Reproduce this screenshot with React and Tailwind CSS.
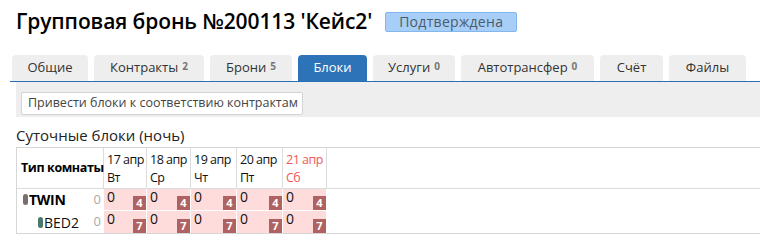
const tabs = [
  { label: "Общие", w: "w-[76px]" },
  { label: "Контракты", count: 2, w: "w-[110px]" },
  { label: "Брони", count: 5, w: "w-[82px]" },
  { label: "Блоки", active: true, w: "w-[69px]" },
  { label: "Услуги", count: 0, w: "w-[82px]" },
  { label: "Автотрансфер", count: 0, w: "w-[133px]" },
  { label: "Счёт", w: "w-[63px]" },
  { label: "Файлы", w: "w-[77px]" },
];

const days = [
  { date: "17 апр", dow: "Вт", w: "w-[43px]" },
  { date: "18 апр", dow: "Ср", w: "w-[44px]" },
  { date: "19 апр", dow: "Чт", w: "w-[46px]" },
  { date: "20 апр", dow: "Пт", w: "w-[46px]" },
  { date: "21 апр", dow: "Сб", w: "w-[44px]", weekend: true },
];

const rooms = [
  { name: "TWIN", dot: "bg-[#7b7069]", total: 4, bold: true },
  { name: "BED2", dot: "bg-[#4b786b]", total: 7, indent: true },
];

function Cell({ w, total }) {
  return (
    <div className={`${w} relative h-full bg-[#ffdcdc] border-r border-white`}>
      <span className="absolute left-[3px] top-[1px] text-[14px] leading-none text-[#111]">0</span>
      <span className="absolute right-0 bottom-0 w-[13px] h-[14px] bg-[#b06262] text-white text-[11px] font-bold leading-[14px] text-center">
        {total}
      </span>
    </div>
  );
}

export default function App() {
  return (
    <div className="bg-white w-[760px] h-[251px] overflow-hidden pl-[10px] text-[#222]" style={{ fontFamily: "'Open Sans', 'Noto Sans', sans-serif" }}>
      <div className="flex items-center gap-[13px] ml-[6px] h-[43px] pt-[1px]">
        <h1 className="text-[21px] font-semibold text-black tracking-[-0.1px]">
          Групповая бронь №200113 'Кейс2'
        </h1>
        <span className="w-[132px] text-center bg-[#a6cef7] border border-[#83b6ec] rounded-[2px] h-[20px] leading-[18px] text-[14px] tracking-[0.3px] text-[#4d5a68]">
          Подтверждена
        </span>
      </div>

      <div className="flex gap-[6px] pl-[2px] mt-[12px] border-b-[1.5px] border-[#2a6fb3]">
        {tabs.map((t) => (
          <div
            key={t.label}
            className={`${t.w} h-[26px] rounded-t-[4px] flex items-center justify-center text-[13px] ${
              t.active ? "bg-[#2d73b7] text-white" : "bg-[#eeeeee] text-[#333]"
            }`}
          >
            {t.label}
            {t.count !== undefined && (
              <span className="ml-[4px] text-[10px] font-bold text-[#777] -mt-[3px]">{t.count}</span>
            )}
          </div>
        ))}
      </div>

      <div className="ml-[6px] bg-[#eeeeee] h-[35px] px-[5px] pt-[7px]">
        <button className="h-[23px] w-[282px] bg-white border border-[#d4d4d4] rounded-[2px] text-[12.5px] text-[#444] text-left pl-[6px]">
          Привести блоки к соответствию контрактам
        </button>
      </div>

      <div className="ml-[6px] mt-[8px] text-[15px] leading-[20px] text-[#222]">Суточные блоки (ночь)</div>

      <div className="ml-[6px] mt-[2px] border-t border-b border-l border-[#d6d6d6]">
        <div className="flex h-[41px] border-b border-[#dcdcdc]">
          <div className="w-[87px] flex items-center pl-[4px] text-[12.5px] font-bold text-black border-r border-[#dcdcdc] whitespace-nowrap tracking-[-0.4px]">
            Тип комнаты
          </div>
          {days.map((d) => (
            <div
              key={d.date}
              className={`${d.w} border-r border-[#dcdcdc] pl-[3px] pt-[3px] text-[12.5px] leading-[18px] whitespace-nowrap overflow-hidden tracking-[-0.5px] ${
                d.weekend ? "text-[#f05a5a]" : "text-[#111]"
              }`}
            >
              <div>{d.date}</div>
              <div>{d.dow}</div>
            </div>
          ))}
          <div className="flex-1" />
        </div>
        {rooms.map((r, i) => (
          <div key={r.name} className={`flex h-[22px] ${i === 0 ? "border-b border-white" : ""}`}>
            <div className={`w-[87px] flex items-center text-[14px] ${r.indent ? "pl-[21px]" : "pl-[6px]"}`}>
              <span className={`w-[5px] h-[11px] rounded-full ${r.dot} mr-[1px]`} />
              <span className={r.bold ? "font-bold text-black tracking-[-0.3px]" : "text-[#111]"}>{r.name}</span>
              <span className="ml-auto mr-[3px] text-[13px] text-[#aaa]">0</span>
            </div>
            {days.map((d) => (
              <Cell key={d.date} w={d.w} total={r.total} />
            ))}
            <div className="flex-1" />
          </div>
        ))}
      </div>
    </div>
  );
}
